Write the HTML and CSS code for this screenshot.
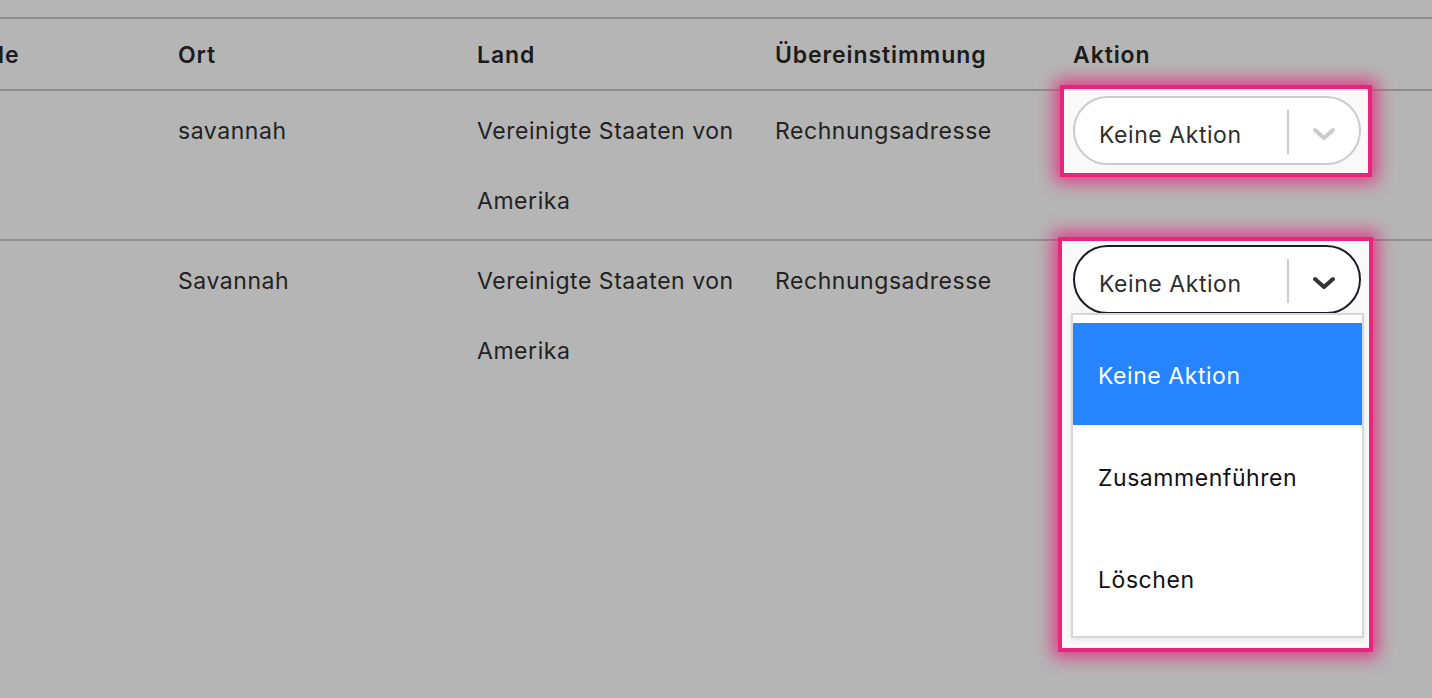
FILE: index.html
```html
<!DOCTYPE html>
<html lang="de">
<head>
<meta charset="utf-8">
<title>Adressabgleich</title>
<link rel="stylesheet" href="styles.css">
</head>
<body>
<div class="table">
  <div class="row head">
    <div class="cell first">le</div>
    <div class="cell">Ort</div>
    <div class="cell">Land</div>
    <div class="cell">Übereinstimmung</div>
    <div class="cell">Aktion</div>
  </div>
  <div class="row body">
    <div class="cell first"></div>
    <div class="cell">savannah</div>
    <div class="cell">Vereinigte Staaten von Amerika</div>
    <div class="cell">Rechnungsadresse</div>
    <div class="cell action">
      <div class="focus focus-a">
        <div class="select">
          <span class="select-value">Keine Aktion</span>
          <span class="select-sep"></span>
          <span class="select-arrow">
            <svg width="24" height="14" viewBox="0 0 24 14"><polyline points="3,3 12,11 21,3" fill="none" stroke="currentColor" stroke-width="4" stroke-linecap="round" stroke-linejoin="round"/></svg>
          </span>
        </div>
      </div>
    </div>
  </div>
  <div class="row body last">
    <div class="cell first"></div>
    <div class="cell">Savannah</div>
    <div class="cell">Vereinigte Staaten von Amerika</div>
    <div class="cell">Rechnungsadresse</div>
    <div class="cell action">
      <div class="focus focus-b">
        <div class="select open">
          <span class="select-value">Keine Aktion</span>
          <span class="select-sep"></span>
          <span class="select-arrow">
            <svg width="24" height="14" viewBox="0 0 24 14"><polyline points="3,3 12,11 21,3" fill="none" stroke="currentColor" stroke-width="4" stroke-linecap="round" stroke-linejoin="round"/></svg>
          </span>
        </div>
        <ul class="menu">
          <li class="menu-item selected">Keine Aktion</li>
          <li class="menu-item">Zusammenführen</li>
          <li class="menu-item">Löschen</li>
        </ul>
      </div>
    </div>
  </div>
</div>
</body>
</html>
```

FILE: styles.css
```css
html, body {
  margin: 0;
  padding: 0;
  background: #b5b5b5;
  overflow: hidden;
}

body {
  font-family: "Inter", "Lato", "Liberation Sans", sans-serif;
  font-size: 23px;
  letter-spacing: 0.55px;
  color: #222222;
  height: 698px;
}

.table {
  padding-top: 17px;
}

.row {
  display: grid;
  grid-template-columns: 178px 299px 298px 298px 1fr;
  border-top: 2px solid #8f8f8f;
}

.row.head {
  height: 72px;
  padding-top: 2px;
  box-sizing: border-box;
  align-items: center;
  font-weight: 600;
  letter-spacing: 0.9px;
  color: #1c1c1c;
}

.row.body {
  padding-top: 5px;
  min-height: 143px;
  align-items: start;
}

.row.body .cell {
  line-height: 70px;
}

.cell.first {
  margin-left: -2px;
}

.row.body .cell.action {
  line-height: normal;
}

.focus {
  position: relative;
  z-index: 0;
  width: 288px;
}

.focus::before {
  content: "";
  position: absolute;
  z-index: -1;
  background: #f9f9f9;
  box-shadow: 0 0 0 4px #e6257b, 0 0 16px 9px rgba(230, 37, 123, 0.85);
}

.focus-a::before {
  top: -7px;
  left: -9px;
  right: -7px;
  bottom: -8px;
  background: linear-gradient(#dfe3e9 0, #dfe3e9 2px, #f9f9f9 2px);
}

.focus-b {
  margin-top: -1px;
}

.focus-b::before {
  top: -4px;
  left: -11px;
  right: -8px;
  bottom: -10px;
}

.select {
  box-sizing: border-box;
  width: 288px;
  height: 69px;
  border: 2px solid #cccccc;
  border-radius: 35px;
  background: #ffffff;
  display: flex;
  align-items: center;
  padding: 5px 0 0 24px;
  color: #2e2e2e;
}

.select.open {
  border-color: #1a1e24;
}

.select-value {
  flex: 1;
  margin-top: 3px;
}

.select-sep {
  width: 2px;
  height: 44px;
  background: #cccccc;
  margin-top: -3px;
}

.select-arrow {
  width: 70px;
  display: flex;
  justify-content: center;
  align-items: center;
  color: #cccccc;
  margin-top: 2px;
}

.select.open .select-arrow {
  color: #333333;
}

.menu {
  list-style: none;
  margin: -1px 0 0 -2px;
  padding: 8px 0 7px;
  width: 293px;
  box-sizing: border-box;
  border: 2px solid #d6d6d6;
  background: #ffffff;
  box-shadow: 0 2px 6px rgba(0, 0, 0, 0.08);
}

.menu-item {
  box-sizing: border-box;
  height: 102px;
  display: flex;
  align-items: center;
  padding: 3px 0 0 25px;
  color: #111111;
}

.menu-item.selected {
  background: #2684ff;
  color: #ffffff;
}
```
